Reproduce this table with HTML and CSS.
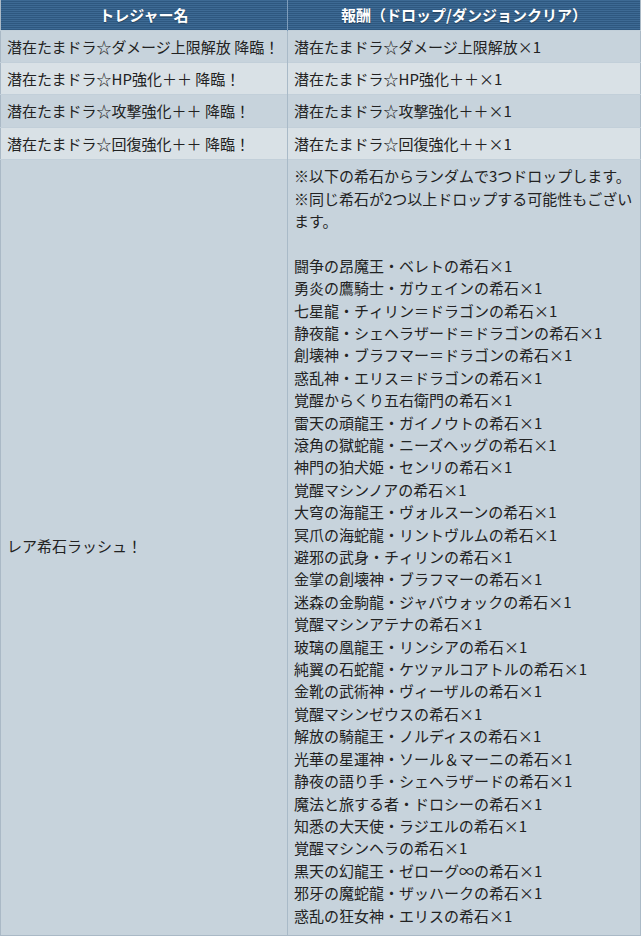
FILE: index.html
```html
<!DOCTYPE html>
<html lang="ja">
<head>
    <meta charset="UTF-8">
    <meta name="viewport" content="width=device-width, initial-scale=1.0">
    <title>トレジャー</title>
    <link rel="stylesheet" href="styles.css">
</head>
<body>
    <table class="treasure">
        <thead>
            <tr>
                <th class="col-name">トレジャー名</th>
                <th>報酬（ドロップ/ダンジョンクリア）</th>
            </tr>
        </thead>
        <tbody>
            <tr>
                <td>潜在たまドラ☆ダメージ上限解放 降臨！</td>
                <td>潜在たまドラ☆ダメージ上限解放×1</td>
            </tr>
            <tr>
                <td>潜在たまドラ☆HP強化＋＋ 降臨！</td>
                <td>潜在たまドラ☆HP強化＋＋×1</td>
            </tr>
            <tr>
                <td>潜在たまドラ☆攻撃強化＋＋ 降臨！</td>
                <td>潜在たまドラ☆攻撃強化＋＋×1</td>
            </tr>
            <tr>
                <td>潜在たまドラ☆回復強化＋＋ 降臨！</td>
                <td>潜在たまドラ☆回復強化＋＋×1</td>
            </tr>
            <tr class="long">
                <td>レア希石ラッシュ！</td>
                <td>
                    ※以下の希石からランダムで3つドロップします。<br>
                    ※同じ希石が2つ以上ドロップする可能性もございます。<br>
                    <br>
                    闘争の昂魔王・ベレトの希石×1<br>
                    勇炎の鷹騎士・ガウェインの希石×1<br>
                    七星龍・チィリン＝ドラゴンの希石×1<br>
                    静夜龍・シェヘラザード＝ドラゴンの希石×1<br>
                    創壊神・ブラフマー＝ドラゴンの希石×1<br>
                    惑乱神・エリス＝ドラゴンの希石×1<br>
                    覚醒からくり五右衛門の希石×1<br>
                    雷天の頑龍王・ガイノウトの希石×1<br>
                    滾角の獄蛇龍・ニーズヘッグの希石×1<br>
                    神門の狛犬姫・センリの希石×1<br>
                    覚醒マシンノアの希石×1<br>
                    大穹の海龍王・ヴォルスーンの希石×1<br>
                    冥爪の海蛇龍・リントヴルムの希石×1<br>
                    避邪の武身・チィリンの希石×1<br>
                    金掌の創壊神・ブラフマーの希石×1<br>
                    迷森の金駒龍・ジャバウォックの希石×1<br>
                    覚醒マシンアテナの希石×1<br>
                    玻璃の凰龍王・リンシアの希石×1<br>
                    純翼の石蛇龍・ケツァルコアトルの希石×1<br>
                    金靴の武術神・ヴィーザルの希石×1<br>
                    覚醒マシンゼウスの希石×1<br>
                    解放の騎龍王・ノルディスの希石×1<br>
                    光華の星運神・ソール＆マーニの希石×1<br>
                    静夜の語り手・シェヘラザードの希石×1<br>
                    魔法と旅する者・ドロシーの希石×1<br>
                    知悉の大天使・ラジエルの希石×1<br>
                    覚醒マシンヘラの希石×1<br>
                    黒天の幻龍王・ゼローグ∞の希石×1<br>
                    邪牙の魔蛇龍・ザッハークの希石×1<br>
                    惑乱の狂女神・エリスの希石×1
                </td>
            </tr>
        </tbody>
    </table>
</body>
</html>
```

FILE: styles.css
```css
body {
    margin: 0;
    background: #ffffff;
    font-family: "Noto Sans CJK JP", "Noto Sans", sans-serif;
    color: #222222;
}
.treasure {
    width: 641px;
    border-collapse: collapse;
    border: 1px solid #aab9c6;
    border-top: none;
    font-size: 15px;
    line-height: 22.4px;
}
.treasure th {
    height: 30px;
    padding: 0 6px;
    color: #ffffff;
    font-weight: bold;
    font-size: 15px;
    line-height: 28px;
    text-align: center;
    text-shadow: 0 1px 1px rgba(0, 0, 0, 0.35);
    background: repeating-linear-gradient(to bottom, #3d6a94 0, #3d6a94 1px, #2e5880 1px, #2e5880 2px);
    border-left: 1px solid #7e9dbb;
    box-sizing: border-box;
}
.treasure th:first-child {
    border-left: none;
}
.treasure .col-name {
    width: 287px;
}
.treasure td {
    padding: 5px 6px 4px 6px;
    vertical-align: middle;
    text-align: left;
    border-left: 1px solid #a9bac8;
    border-top: 1px solid #c2cfd9;
    background: #c7d3dc;
}
.treasure td:first-child {
    border-left: none;
}
.treasure tbody tr:nth-child(even) td {
    background: #d9e1e6;
}
.treasure .long td {
    padding-bottom: 8px;
}
```
